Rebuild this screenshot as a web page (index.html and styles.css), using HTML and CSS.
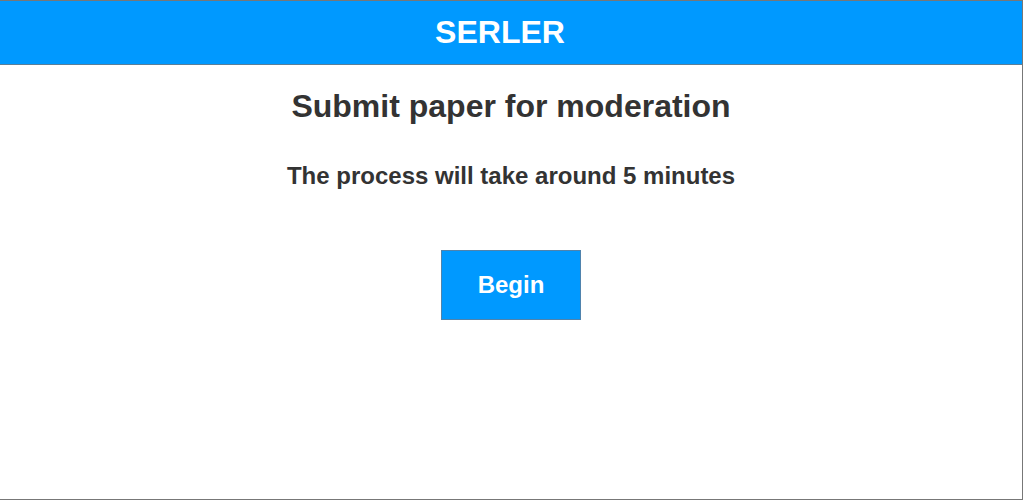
FILE: index.html
```html
<!DOCTYPE html>
<html lang="en">
<head>
<meta charset="utf-8">
<title>SERLER</title>
<link rel="stylesheet" href="styles.css">
</head>
<body>
<div class="frame">
  <header class="topbar">
    <span class="brand">SERLER</span>
  </header>
  <main class="content">
    <h1 class="title">Submit paper for moderation</h1>
    <p class="note">The process will take around 5 minutes</p>
    <button class="begin" type="button">Begin</button>
  </main>
</div>
</body>
</html>
```

FILE: styles.css
```css
html, body {
  margin: 0;
  padding: 0;
  background: #ffffff;
}

body {
  font-family: "Liberation Sans", Arial, sans-serif;
  color: #333333;
}

.frame {
  width: 1022px;
  height: 498px;
  border-top: 1px solid #777777;
  border-right: 1px solid #777777;
  border-bottom: 1px solid #777777;
  display: flex;
  flex-direction: column;
}

.topbar {
  height: 63px;
  background: #0099ff;
  border-bottom: 1px solid #5a7f99;
  display: flex;
  align-items: center;
  justify-content: center;
  padding-right: 22px;
}

.brand {
  color: #ffffff;
  font-weight: bold;
  font-size: 32px;
  line-height: 36px;
  margin-bottom: 2px;
}

.content {
  display: flex;
  flex-direction: column;
  align-items: center;
  padding-top: 23px;
}

.title {
  margin: 0;
  font-size: 32px;
  line-height: 36px;
  font-weight: bold;
  color: #333333;
}

.note {
  margin: 38px 0 0;
  font-size: 24px;
  line-height: 28px;
  font-weight: bold;
  color: #333333;
}

.begin {
  margin-top: 60px;
  width: 140px;
  height: 70px;
  box-sizing: border-box;
  background: #0099ff;
  border: 1px solid #4f83ad;
  border-radius: 0;
  color: #ffffff;
  font-family: "Liberation Sans", Arial, sans-serif;
  font-size: 24px;
  font-weight: bold;
  padding: 0;
  display: flex;
  align-items: center;
  justify-content: center;
  cursor: pointer;
}
```
